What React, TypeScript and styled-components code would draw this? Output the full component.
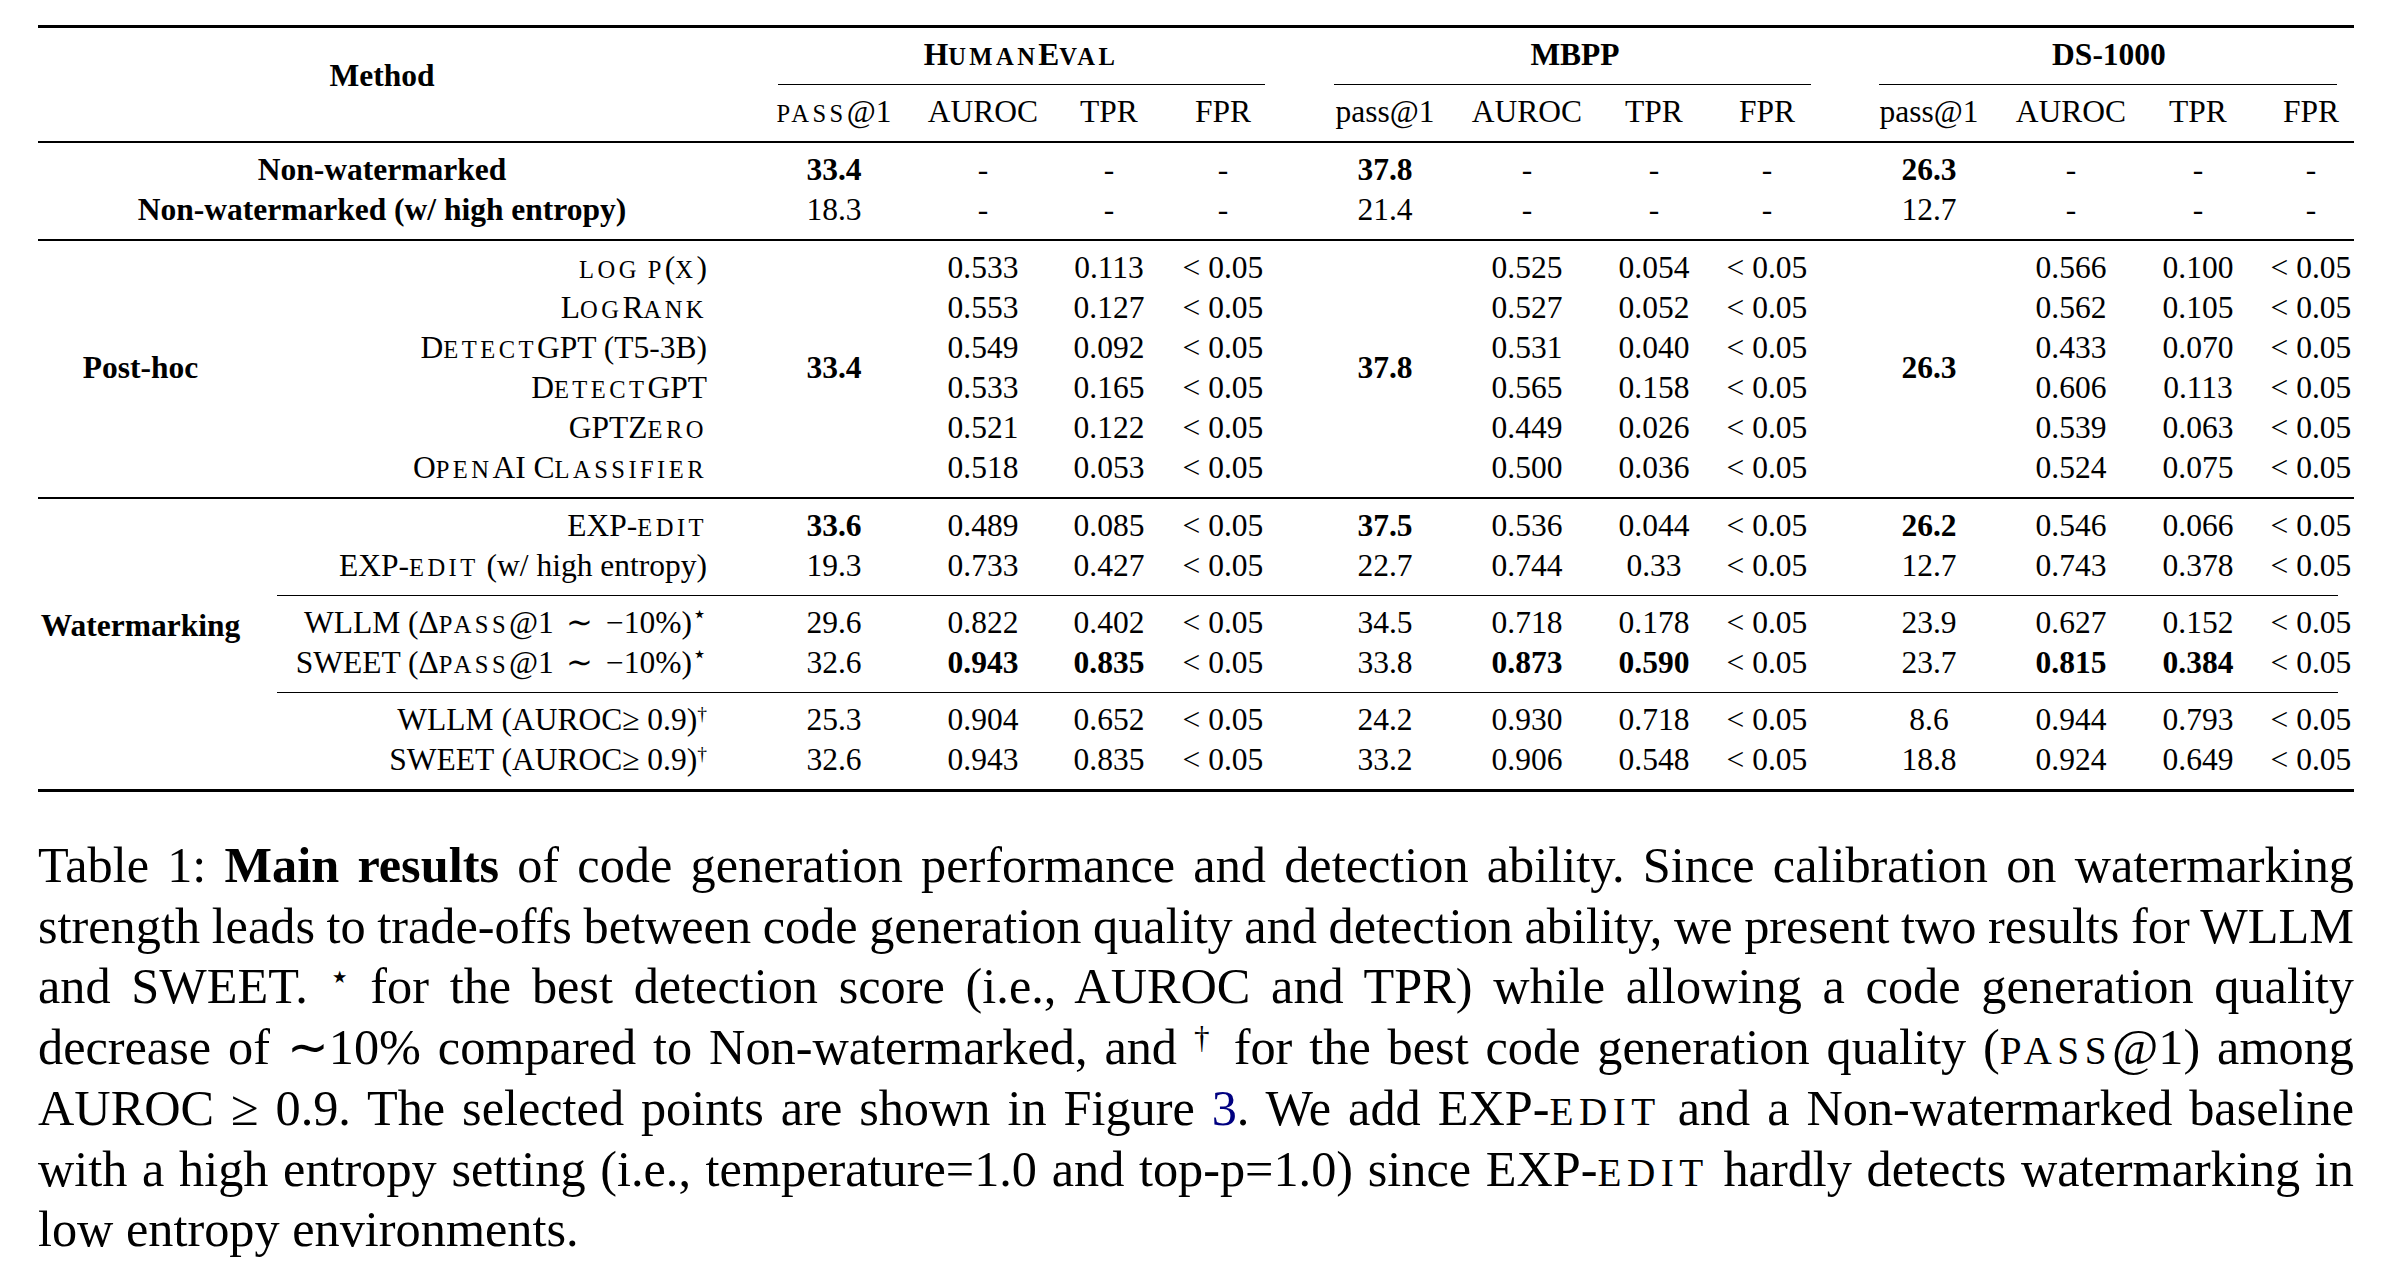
import React from "react";
import styled, { createGlobalStyle } from "styled-components";

const GlobalStyle = createGlobalStyle`
  html, body {
    margin: 0;
    padding: 0;
    background: #fff;
  }
  body {
    font-family: "Liberation Serif", "Times New Roman", serif;
    color: #000;
  }
`;

// column tracks: label | method | gap | HumanEval x4 | gap | MBPP x4 | gap | DS-1000 x3 | gap | FPR
const TRACKS =
  "224px 464px 40px 136px 162px 90px 138px 28px 130px 154px 100px 126px 34px 130px 154px 100px 20px 86px";

const DATA_COLS = [4, 5, 6, 7, 9, 10, 11, 12, 14, 15, 16, 18];

const Page = styled.div`
  width: 2316px;
  padding: 25px 28px 0 38px;
`;

const Table = styled.div`
  display: grid;
  grid-template-columns: ${TRACKS};
  font-size: 31.5px;
  line-height: 40px;
`;

const Rule = styled.div<{ $cols: string; $row: number; $w: number; $l?: number; $r?: number; $first?: boolean }>`
  grid-column: ${(p) => p.$cols};
  grid-row: ${(p) => p.$row};
  height: ${(p) => p.$w}px;
  background: #000;
  margin: ${(p) => (p.$first ? 0 : 9)}px ${(p) => p.$r ?? 0}px 7px ${(p) => p.$l ?? 0}px;
`;

const GroupHead = styled.div<{ $cols: string; $shift?: number }>`
  grid-column: ${(p) => p.$cols};
  grid-row: 2;
  text-align: center;
  font-weight: 700;
  padding-right: ${(p) => p.$shift ?? 0}px;
  white-space: nowrap;
`;

const MethodHead = styled.div`
  grid-column: 1 / 3;
  grid-row: 2 / 5;
  align-self: center;
  text-align: center;
  font-weight: 700;
  padding-bottom: 15px;
`;

const Cell = styled.div<{ $col: number; $row: number | string; $bold?: boolean }>`
  grid-column: ${(p) => p.$col};
  grid-row: ${(p) => p.$row};
  align-self: center;
  text-align: center;
  white-space: nowrap;
  font-weight: ${(p) => (p.$bold ? 700 : 400)};
`;

const WideLabel = styled.div<{ $row: number }>`
  grid-column: 1 / 3;
  grid-row: ${(p) => p.$row};
  text-align: center;
  font-weight: 700;
  white-space: nowrap;
`;

const GroupLabel = styled.div<{ $rows: string; $lift?: number }>`
  grid-column: 1;
  grid-row: ${(p) => p.$rows};
  align-self: center;
  text-align: center;
  font-weight: 700;
  padding-right: 19px;
  margin-bottom: ${(p) => p.$lift ?? 0}px;
`;

const Name = styled.div<{ $row: number }>`
  grid-column: 2;
  grid-row: ${(p) => p.$row};
  text-align: right;
  padding-right: 19px;
  white-space: nowrap;
`;

// LaTeX-like small caps: lowercase runs set as smaller, tracked capitals
const ScLow = styled.span`
  text-transform: uppercase;
  font-size: 0.78em;
  letter-spacing: 0.14em;
  line-height: 0;
`;

const Sc = ({ children }: { children: string }) => (
  <>
    {children.split(/([a-z]+)/).map((part, i) =>
      /^[a-z]+$/.test(part) ? <ScLow key={i}>{part}</ScLow> : part
    )}
  </>
);

const Rel = styled.span`
  margin: 0 0.4em;
`;

const Sup = styled.sup<{ $size?: number; $raise?: number }>`
  font-size: ${(p) => p.$size ?? 0.62}em;
  line-height: 0;
  vertical-align: ${(p) => p.$raise ?? 0.5}em;
`;

const Caption = styled.div`
  margin-top: 36px;
  font-size: 50.3px;
  line-height: 60.7px;
`;

const CaptionLine = styled.div<{ $last?: boolean }>`
  white-space: nowrap;
  word-spacing: ${(p) => (p.$last ? 0 : -3)}px;
  text-align: ${(p) => (p.$last ? "left" : "justify")};
  text-align-last: ${(p) => (p.$last ? "left" : "justify")};
`;

const Link = styled.span`
  color: #000080;
`;

type Row = { row: number; name?: React.ReactNode; vals: (string | null)[] };

const LT = "<\u00a00.05";

const renderVals = (row: number, vals: (string | null)[]) =>
  vals.map((v, i) =>
    v === null ? null : (
      <Cell key={`${row}-${i}`} $col={DATA_COLS[i]} $row={row} $bold={v.startsWith("!")}>
        {v.replace("!", "")}
      </Cell>
    )
  );

const postHoc: Row[] = [
  { row: 9, name: <Sc>log p(x)</Sc>, vals: [null, "0.533", "0.113", LT, null, "0.525", "0.054", LT, null, "0.566", "0.100", LT] },
  { row: 10, name: <Sc>LogRank</Sc>, vals: [null, "0.553", "0.127", LT, null, "0.527", "0.052", LT, null, "0.562", "0.105", LT] },
  { row: 11, name: <><Sc>DetectGPT</Sc> (T5-3B)</>, vals: [null, "0.549", "0.092", LT, null, "0.531", "0.040", LT, null, "0.433", "0.070", LT] },
  { row: 12, name: <Sc>DetectGPT</Sc>, vals: [null, "0.533", "0.165", LT, null, "0.565", "0.158", LT, null, "0.606", "0.113", LT] },
  { row: 13, name: <Sc>GPTZero</Sc>, vals: [null, "0.521", "0.122", LT, null, "0.449", "0.026", LT, null, "0.539", "0.063", LT] },
  { row: 14, name: <Sc>OpenAI Classifier</Sc>, vals: [null, "0.518", "0.053", LT, null, "0.500", "0.036", LT, null, "0.524", "0.075", LT] },
];

const delta = (
  <>
    (Δ<Sc>pass</Sc>@1<Rel>∼</Rel>−10%)<Sup $size={0.75} $raise={0.45}>⋆</Sup>
  </>
);
const auroc = (
  <>
    (AUROC≥ 0.9)<Sup>†</Sup>
  </>
);

const expEdit = (
  <>
    EXP-<Sc>edit</Sc>
  </>
);

const watermarking: Row[] = [
  { row: 16, name: expEdit, vals: ["!33.6", "0.489", "0.085", LT, "!37.5", "0.536", "0.044", LT, "!26.2", "0.546", "0.066", LT] },
  { row: 17, name: <>{expEdit} (w/ high entropy)</>, vals: ["19.3", "0.733", "0.427", LT, "22.7", "0.744", "0.33", LT, "12.7", "0.743", "0.378", LT] },
  { row: 19, name: <>WLLM {delta}</>, vals: ["29.6", "0.822", "0.402", LT, "34.5", "0.718", "0.178", LT, "23.9", "0.627", "0.152", LT] },
  { row: 20, name: <>SWEET {delta}</>, vals: ["32.6", "!0.943", "!0.835", LT, "33.8", "!0.873", "!0.590", LT, "23.7", "!0.815", "!0.384", LT] },
  { row: 22, name: <>WLLM {auroc}</>, vals: ["25.3", "0.904", "0.652", LT, "24.2", "0.930", "0.718", LT, "8.6", "0.944", "0.793", LT] },
  { row: 23, name: <>SWEET {auroc}</>, vals: ["32.6", "0.943", "0.835", LT, "33.2", "0.906", "0.548", LT, "18.8", "0.924", "0.649", LT] },
];

const subHeads = (passSc: boolean, start: number) => [
  <Cell key={`p${start}`} $col={DATA_COLS[start]} $row={4}>
    {passSc ? <><Sc>pass</Sc>@1</> : "pass@1"}
  </Cell>,
  <Cell key={`a${start}`} $col={DATA_COLS[start + 1]} $row={4}>AUROC</Cell>,
  <Cell key={`t${start}`} $col={DATA_COLS[start + 2]} $row={4}>TPR</Cell>,
  <Cell key={`f${start}`} $col={DATA_COLS[start + 3]} $row={4}>FPR</Cell>,
];

export default function App() {
  return (
    <>
      <GlobalStyle />
      <Page>
        <Table>
          <Rule $cols="1 / -1" $row={1} $w={3} $first />

          <MethodHead>Method</MethodHead>
          <GroupHead $cols="4 / 8" $shift={16}>
            <Sc>HumanEval</Sc>
          </GroupHead>
          <GroupHead $cols="9 / 13">MBPP</GroupHead>
          <GroupHead $cols="14 / 19">DS-1000</GroupHead>

          <Rule $cols="4 / 8" $row={3} $w={1} $l={12} $r={27} />
          <Rule $cols="9 / 13" $row={3} $w={1} $l={14} $r={19} />
          <Rule $cols="14 / 19" $row={3} $w={1} $l={15} $r={17} />

          {subHeads(true, 0)}
          {subHeads(false, 4)}
          {subHeads(false, 8)}

          <Rule $cols="1 / -1" $row={5} $w={2} />

          <WideLabel $row={6}>Non-watermarked</WideLabel>
          {renderVals(6, ["!33.4", "-", "-", "-", "!37.8", "-", "-", "-", "!26.3", "-", "-", "-"])}
          <WideLabel $row={7}>Non-watermarked (w/ high entropy)</WideLabel>
          {renderVals(7, ["18.3", "-", "-", "-", "21.4", "-", "-", "-", "12.7", "-", "-", "-"])}

          <Rule $cols="1 / -1" $row={8} $w={2} />

          <GroupLabel $rows="9 / 15">Post-hoc</GroupLabel>
          <Cell $col={DATA_COLS[0]} $row="9 / 15" $bold>33.4</Cell>
          <Cell $col={DATA_COLS[4]} $row="9 / 15" $bold>37.8</Cell>
          <Cell $col={DATA_COLS[8]} $row="9 / 15" $bold>26.3</Cell>
          {postHoc.map((r) => (
            <React.Fragment key={r.row}>
              <Name $row={r.row}>{r.name}</Name>
              {renderVals(r.row, r.vals)}
            </React.Fragment>
          ))}

          <Rule $cols="1 / -1" $row={15} $w={2} />

          <GroupLabel $rows="16 / 24" $lift={34}>Watermarking</GroupLabel>
          {watermarking.map((r) => (
            <React.Fragment key={r.row}>
              <Name $row={r.row}>{r.name}</Name>
              {renderVals(r.row, r.vals)}
            </React.Fragment>
          ))}
          <Rule $cols="2 / -1" $row={18} $w={1} $l={15} $r={16} />
          <Rule $cols="2 / -1" $row={21} $w={1} $l={15} $r={16} />

          <Rule $cols="1 / -1" $row={24} $w={3} />
        </Table>

        <Caption>
          <CaptionLine>
            Table 1: <b>Main results</b> of code generation performance and detection ability. Since calibration on watermarking
          </CaptionLine>
          <CaptionLine>
            strength leads to trade-offs between code generation quality and detection ability, we present two results for WLLM
          </CaptionLine>
          <CaptionLine>
            and SWEET. <Sup $size={0.68} $raise={0.45}>⋆</Sup> for the best detection score (i.e., AUROC and TPR) while allowing a code generation quality
          </CaptionLine>
          <CaptionLine>
            decrease of ∼10% compared to Non-watermarked, and <Sup>†</Sup> for the best code generation quality (<Sc>pass</Sc>@1) among
          </CaptionLine>
          <CaptionLine>
            AUROC ≥ 0.9. The selected points are shown in Figure <Link>3</Link>. We add {expEdit} and a Non-watermarked baseline
          </CaptionLine>
          <CaptionLine>
            with a high entropy setting (i.e., temperature=1.0 and top-p=1.0) since {expEdit} hardly detects watermarking in
          </CaptionLine>
          <CaptionLine $last>low entropy environments.</CaptionLine>
        </Caption>
      </Page>
    </>
  );
}
